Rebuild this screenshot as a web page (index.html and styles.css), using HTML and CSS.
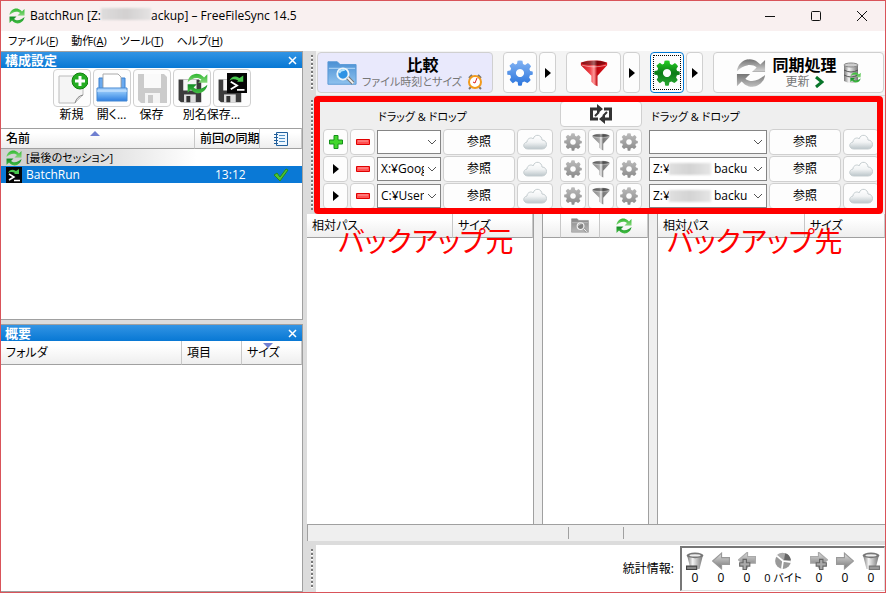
FILE: index.html
```html
<!DOCTYPE html>
<html lang="ja">
<head>
<meta charset="utf-8">
<title>BatchRun – FreeFileSync 14.5</title>
<link rel="stylesheet" href="styles.css">
</head>
<body>
<svg class="defs" width="0" height="0" aria-hidden="true">
  <defs>
    <linearGradient id="green" gradientUnits="userSpaceOnUse" x1="0" y1="2" x2="0" y2="30"><stop offset="0" stop-color="#35b935"/><stop offset=".45" stop-color="#83d778"/><stop offset=".55" stop-color="#138c24"/><stop offset="1" stop-color="#42bd42"/></linearGradient>
    <linearGradient id="silver" gradientUnits="userSpaceOnUse" x1="0" y1="2" x2="0" y2="30"><stop offset="0" stop-color="#777"/><stop offset=".4" stop-color="#ccc"/><stop offset=".55" stop-color="#777"/><stop offset="1" stop-color="#bbb"/></linearGradient>
    <linearGradient id="blueGear" gradientUnits="userSpaceOnUse" x1="0" y1="2" x2="0" y2="30"><stop offset="0" stop-color="#7eb0f2"/><stop offset="1" stop-color="#2f78de"/></linearGradient>
    <linearGradient id="greenGear" gradientUnits="userSpaceOnUse" x1="0" y1="2" x2="0" y2="30"><stop offset="0" stop-color="#22c922"/><stop offset=".5" stop-color="#0b7a16"/><stop offset="1" stop-color="#26a42e"/></linearGradient>
    <linearGradient id="grayGear" gradientUnits="userSpaceOnUse" x1="0" y1="2" x2="0" y2="30"><stop offset="0" stop-color="#b9b9b9"/><stop offset="1" stop-color="#8c8c8c"/></linearGradient>
    <linearGradient id="redFunnel" x1="0" x2="1"><stop offset="0" stop-color="#c80d15"/><stop offset=".35" stop-color="#f0444a"/><stop offset=".5" stop-color="#ff9a9a"/><stop offset=".62" stop-color="#c00810"/><stop offset="1" stop-color="#e01820"/></linearGradient>
    <linearGradient id="grayFunnel" x1="0" x2="1"><stop offset="0" stop-color="#888"/><stop offset=".4" stop-color="#aaa"/><stop offset=".5" stop-color="#eee"/><stop offset=".62" stop-color="#777"/><stop offset="1" stop-color="#999"/></linearGradient>
    <linearGradient id="cloudFill" x1="0" y1="0" x2="0" y2="1"><stop offset="0" stop-color="#fff"/><stop offset=".5" stop-color="#f2f4f5"/><stop offset="1" stop-color="#bcc6ca"/></linearGradient>
    <linearGradient id="folderFill" x1="0" y1="0" x2="0" y2="1"><stop offset="0" stop-color="#4b90d4"/><stop offset="1" stop-color="#8fc2ee"/></linearGradient>
    <linearGradient id="tray" x1="0" y1="0" x2="0" y2="1"><stop offset="0" stop-color="#b7dbff"/><stop offset=".5" stop-color="#6fb0f2"/><stop offset="1" stop-color="#2f7fe0"/></linearGradient>
    <linearGradient id="metal" x1="0" x2="1"><stop offset="0" stop-color="#777"/><stop offset=".35" stop-color="#f4f4f4"/><stop offset="1" stop-color="#777"/></linearGradient>
    <linearGradient id="arrowFill" x1="0" y1="0" x2="0" y2="1"><stop offset="0" stop-color="#ddd"/><stop offset="1" stop-color="#777"/></linearGradient>
  </defs>
  <symbol id="sync" viewBox="0 0 32 32">
    <path d="M1 14C2 5 11-1 19 2c3 1 5 3 7 5l5-5v13H17l5-5C16 5 7 8 1 14z"/>
    <path d="M31 18C30 27 21 33 13 30c-3-1-5-3-7-5l-5 5V17h14l-5 5c6 5 15 2 21-4z"/>
  </symbol>
  <symbol id="gear" viewBox="0 0 32 32">
    <path fill-rule="evenodd" d="M13 1q3-1 6 0l.7 4 2.500 1 3.600-2.400q2.300 1.700 3.800 4.100L27.500 11l1 2.500 3 .7q.5 2 0 4l-3.300.7-1 2.500 2 3.200q-1.800 2.400-4.200 3.800L21.500 26.400l-2.500 1-.8 4q-2.300.5-4.500 0l-.6-4.300-2.500-1L7.200 28.500q-2.500-1.800-3.900-4.200L5 21.100l-1-2.500L.5 18q-.5-2.500 0-4.500l3.600-.6 1-2.500L3 7.200q1.800-2.400 4.200-3.900L10 5.500l2.300-1zM16 11a5 5 0 1 0 .01 0z"/>
  </symbol>
  <symbol id="funnel" viewBox="0 0 32 32">
    <path d="M1 4q15-5 30 0v3L20 19v12q-4-1-7-5v-7L1 7z"/>
    <ellipse cx="16" cy="4.500" rx="14" ry="2.500" fill="#000" opacity=".35"/>
    <path d="M2 7q14 4 28 0" fill="none" stroke="#fff" opacity=".5"/>
  </symbol>
  <symbol id="cloud" viewBox="0 0 24 16">
    <path d="M5 15C0 15-1 9 4 8c0-4 5-5 6-3 2-6 9-4 9 1 6 0 6 9 0 9z" fill="url(#cloudFill)" stroke="#c5cdd0"/>
  </symbol>
  <symbol id="chev" viewBox="0 0 10 6"><path d="M1 1l4 4 4-4" fill="none" stroke="#555"/></symbol>
  <symbol id="tri" viewBox="0 0 6 10"><path d="M0 0l6 5-6 5z"/></symbol>
  <symbol id="minus" viewBox="0 0 14 6"><path d="M.5.5h13v5H.5z" fill="#ff5252" stroke="#e00000"/><path d="M2 2h10" stroke="#ff9c9c"/></symbol>
  <symbol id="floppy" viewBox="0 0 32 32">
    <path d="M2 2h26l3 3v26H5l-3-3z" fill="#3c3c3c"/><path d="M8 2h17v14H8z" fill="#f4f4f4"/><path d="M9 21h15v10H9z" fill="#ddd"/><path d="M12 23h5v8h-5z" fill="#333"/>
  </symbol>
  <symbol id="terminal" viewBox="0 0 16 16">
    <path d="M0 0h16v16H0z" fill="#050505"/><path d="M2 6q2-4 6-3l2 1 3-2v5H8l1-1Q5 4 2 6z" fill="#49c84e"/><path d="M3 7l5 3-5 3M8 13.500h6" fill="none" stroke="#fff" stroke-width="1.500"/>
  </symbol>
  <symbol id="lens" viewBox="0 0 32 26">
    <path d="M1 1h10l3 3h17v21H1z" fill="url(#folderFill)" stroke="#5797d5"/><path d="M2 8h28" stroke="#b8dcfa"/>
    <circle cx="17" cy="14" r="6" fill="#2e93e4" stroke="#eef6fa" stroke-width="2"/><path d="M13 13q2-4 6-3" stroke="#b4e5ff" stroke-width="2" fill="none"/><path d="M22 18l6 6" stroke="#777" stroke-width="4"/><path d="M22 18l6 6" stroke="#f4f4f4" stroke-width="2"/>
  </symbol>
  <symbol id="bin" viewBox="0 0 16 16">
    <path d="M1 3l3 12h8l3-12z" fill="url(#metal)"/><ellipse cx="8" cy="3" rx="7.500" ry="2.500" fill="#777"/><ellipse cx="8" cy="3" rx="5" ry="1" fill="#eee"/>
  </symbol>
  <symbol id="arrow" viewBox="0 0 16 16"><path d="M.5 5h7V1L15.500 8 7.500 15v-4h-7z" fill="url(#arrowFill)" stroke="#999"/></symbol>
  <symbol id="arrowplus" viewBox="0 0 16 16"><path d="M.5 4h7V0L15.500 7 7.500 14v-4h-7z" fill="url(#arrowFill)" stroke="#aaa"/><path d="M8.500 6.500h3v3h3v3h-3v3h-3v-3h-3v-3h3z" fill="#aaa" stroke="#666"/></symbol>
</svg>

<div class="window">
  <header class="titlebar">
    <svg class="i16 green"><use href="#sync"/></svg>
    <h1>BatchRun [Z:<span class="smudge title-smudge"></span>ackup] – FreeFileSync 14.5</h1>
    <div class="winbtns">
      <button aria-label="最小化"><svg width="12" height="12"><path d="M1 6.500h10" stroke="#111"/></svg></button>
      <button aria-label="最大化"><svg width="12" height="12"><rect x="1.500" y="1.500" width="9" height="9" rx="1" fill="none" stroke="#111"/></svg></button>
      <button aria-label="閉じる"><svg width="12" height="12"><path d="M1 1l10 10M11 1L1 11" stroke="#111"/></svg></button>
    </div>
  </header>
  <nav class="menubar">
    <button>ファイル(<u>F</u>)</button><button>動作(<u>A</u>)</button><button>ツール(<u>T</u>)</button><button>ヘルプ(<u>H</u>)</button>
  </nav>
  <div class="workspace">
    <aside class="left">
      <section class="pane config">
        <div class="caption"><h2>構成設定</h2><button aria-label="構成設定を閉じる"><svg width="9" height="9"><path d="M1 1l7 7M8 1L1 8" stroke="#fff" stroke-width="1.500"/></svg></button></div>
        <div class="filebar">
          <div class="tool"><button class="btn" id="b-new" aria-labelledby="l-new"><svg class="i32" viewBox="0 0 32 32"><path d="M3 4h24v19l-8 8H3z" fill="#f5f5f5" stroke="#bbb"/><path d="M19 31q2-7 8-8" fill="#ddd" stroke="#888"/><circle cx="24" cy="9" r="8" fill="#24ad22" stroke="#12820e"/><path d="M24 4v10M19 9h10" stroke="#fff" stroke-width="3"/></svg></button><label id="l-new" for="b-new">新規</label></div>
          <div class="tool"><button class="btn" id="b-open" aria-labelledby="l-open"><svg class="i32" viewBox="0 0 32 32"><path d="M3 16V6h4v10M25 16V6h4v10" fill="#69a9ef" stroke="#3a80cf"/><path d="M7 2h15l3 3v12H7z" fill="#fff" stroke="#aaa"/><path d="M1 16h30v13H1z" fill="url(#tray)" stroke="#4588d2"/><path d="M1 19h30" stroke="#d5ebff"/></svg></button><label id="l-open" for="b-open">開く...</label></div>
          <div class="tool"><button class="btn faded" id="b-save" aria-labelledby="l-save" disabled><svg class="i32" viewBox="0 0 32 32"><use href="#floppy"/></svg></button><label id="l-save" for="b-save">保存</label></div>
          <div class="tool wide"><div class="pair"><button class="btn" aria-label="同期設定を別名保存"><svg class="i32" viewBox="0 0 32 32"><svg x="1" y="6" width="25" height="25"><use href="#floppy"/></svg><svg class="green" x="11" y="1" width="21" height="21"><use href="#sync"/></svg></svg></button><button class="btn" aria-label="一括ジョブを別名保存"><svg class="i32" viewBox="0 0 32 32"><svg x="1" y="6" width="25" height="25"><use href="#floppy"/></svg><svg x="11" y="1" width="20" height="20"><use href="#terminal"/></svg></svg></button></div><span>別名保存...</span></div>
        </div>
        <table class="sessions">
          <thead><tr><th>名前<svg class="sort" width="10" height="5"><path d="M0 5l5-5 5 5z" fill="#6f7fd0"/></svg></th><th class="last">前回の同期</th><th class="log"><svg width="16" height="16"><path d="M3.500 1.500h11v13h-11z" fill="#eef7ff" stroke="#215f9b"/><path d="M6 4.500h6M6 7.500h6M6 10.500h6" stroke="#4c8dc4"/><path d="M1 3.500h4M1 6.500h4M1 9.500h4M1 12.500h4" stroke="#215f9b"/></svg></th></tr></thead>
          <tbody>
            <tr class="prev"><td colspan="3"><span class="cell"><svg class="i16 green"><use href="#sync"/></svg>[最後のセッション]</span></td></tr>
            <tr class="selected"><td><span class="cell"><svg class="i16"><use href="#terminal"/></svg>BatchRun</span></td><td class="time">13:12</td><td class="log"><svg width="16" height="14"><path d="M1 7l3-2 3 4 6-8 2 1-8 11z" fill="#4cc436" stroke="#248b1d"/></svg></td></tr>
          </tbody>
        </table>
      </section>
      <section class="pane overview">
        <div class="caption"><h2>概要</h2><button aria-label="概要を閉じる"><svg width="9" height="9"><path d="M1 1l7 7M8 1L1 8" stroke="#fff" stroke-width="1.500"/></svg></button></div>
        <table class="summary"><thead><tr><th>フォルダ</th><th class="items">項目</th><th class="size">サイズ<svg class="sort" width="10" height="5"><path d="M0 0l5 5 5-5z" fill="#6f7fd0"/></svg></th></tr></thead></table>
      </section>
    </aside>

    <main class="right">
      <div class="strip toolbar">
        <div class="grip"></div>
        <div class="actions">
          <button class="btn compare"><svg class="i30"><use href="#lens"/></svg><span class="txt"><b>比較</b><small class="tight">ファイル時刻とサイズ <svg width="16" height="16" viewBox="0 0 16 16"><path d="M2 4l3-3M14 4l-3-3M4 13l-2 2M12 13l2 2" stroke="#777" stroke-width="2"/><circle cx="8" cy="8" r="6" fill="#fff" stroke="#f29a1c" stroke-width="2"/><path d="M8 9l2-5M8 9L6 8" stroke="#d22" fill="none"/></svg></small></span></button>
          <div class="group"><button class="btn sq" aria-label="比較設定"><svg class="i26 gblue"><use href="#gear"/></svg></button><button class="btn drop" aria-label="比較設定メニュー"><svg class="tri"><use href="#tri"/></svg></button></div>
          <div class="group"><button class="btn filter" aria-label="フィルター"><svg class="i28 fred"><use href="#funnel"/></svg></button><button class="btn drop" aria-label="フィルターメニュー"><svg class="tri"><use href="#tri"/></svg></button></div>
          <div class="group"><button class="btn sq focused" aria-label="同期設定"><svg class="i26 ggreen"><use href="#gear"/></svg></button><button class="btn drop" aria-label="同期設定メニュー"><svg class="tri"><use href="#tri"/></svg></button></div>
          <button class="btn syncbtn"><svg class="i30 silver"><use href="#sync"/></svg><span class="txt"><b>同期処理</b><small>更新 <svg width="9" height="12"><path d="M1 1l6 5-6 5" fill="none" stroke="#08752a" stroke-width="3"/></svg></small></span><svg width="18" height="22" viewBox="0 0 18 22"><path d="M1 3h14v16q-7 4-14 0z" fill="url(#metal)"/><ellipse cx="8" cy="3" rx="7" ry="2" fill="#ccc" stroke="#888"/><path d="M1 8q7 4 14 0M1 13q7 4 14 0" fill="none" stroke="#555"/><svg class="green" x="7" y="10" width="11" height="11"><use href="#sync"/></svg></svg></button>
        </div>
      </div>

      <div class="strip folders">
        <div class="grip"></div>
        <div class="pairs">
          <div class="side source">
            <h3>ドラッグ &amp; ドロップ</h3>
            <div class="row"><button class="btn mini" aria-label="追加"><svg width="16" height="16"><path d="M6 1.500h4v4.500h4.500v4H10v4.500H6V10H1.500V6H6z" fill="#42d72c" stroke="#16911a"/></svg></button><button class="btn mini" aria-label="削除"><svg class="minus"><use href="#minus"/></svg></button><div class="combo"><input aria-label="コピー元 1"><button aria-label="履歴"><svg class="chev"><use href="#chev"/></svg></button></div><button class="btn browse">参照</button><button class="btn cl" aria-label="クラウド"><svg class="cloud"><use href="#cloud"/></svg></button></div>
            <div class="row"><button class="btn mini" aria-label="メニュー"><svg class="tri"><use href="#tri"/></svg></button><button class="btn mini" aria-label="削除"><svg class="minus"><use href="#minus"/></svg></button><div class="combo"><input aria-label="コピー元 2" value="X:¥Google"><button aria-label="履歴"><svg class="chev"><use href="#chev"/></svg></button></div><button class="btn browse">参照</button><button class="btn cl" aria-label="クラウド"><svg class="cloud"><use href="#cloud"/></svg></button></div>
            <div class="row"><button class="btn mini" aria-label="メニュー"><svg class="tri"><use href="#tri"/></svg></button><button class="btn mini" aria-label="削除"><svg class="minus"><use href="#minus"/></svg></button><div class="combo"><input aria-label="コピー元 3" value="C:¥Users"><button aria-label="履歴"><svg class="chev"><use href="#chev"/></svg></button></div><button class="btn browse">参照</button><button class="btn cl" aria-label="クラウド"><svg class="cloud"><use href="#cloud"/></svg></button></div>
          </div>
          <div class="side local">
            <button class="btn swap" aria-label="左右を入れ替え"><svg width="24" height="20" viewBox="0 0 24 20"><path d="M9 15H2.500V5H9M15 5h6.500v10H15" fill="none" stroke="#333" stroke-width="3"/><path d="M8 0l6 5-6 5zM16 10l-6 5 6 5z" fill="#333"/><path d="M6 12l4-4M14 12l4-4" stroke="#333" stroke-width="2"/></svg></button>
            <div class="row"><button class="btn mini" aria-label="比較設定"><svg class="i18 ggray"><use href="#gear"/></svg></button><button class="btn mini" aria-label="フィルター"><svg class="i18 fgray"><use href="#funnel"/></svg></button><button class="btn mini" aria-label="同期設定"><svg class="i18 ggray"><use href="#gear"/></svg></button></div>
            <div class="row"><button class="btn mini" aria-label="比較設定"><svg class="i18 ggray"><use href="#gear"/></svg></button><button class="btn mini" aria-label="フィルター"><svg class="i18 fgray"><use href="#funnel"/></svg></button><button class="btn mini" aria-label="同期設定"><svg class="i18 ggray"><use href="#gear"/></svg></button></div>
            <div class="row"><button class="btn mini" aria-label="比較設定"><svg class="i18 ggray"><use href="#gear"/></svg></button><button class="btn mini" aria-label="フィルター"><svg class="i18 fgray"><use href="#funnel"/></svg></button><button class="btn mini" aria-label="同期設定"><svg class="i18 ggray"><use href="#gear"/></svg></button></div>
          </div>
          <div class="side target">
            <h3>ドラッグ &amp; ドロップ</h3>
            <div class="row"><div class="combo"><input aria-label="コピー先 1"><button aria-label="履歴"><svg class="chev"><use href="#chev"/></svg></button></div><button class="btn browse">参照</button><button class="btn cl" aria-label="クラウド"><svg class="cloud"><use href="#cloud"/></svg></button></div>
            <div class="row"><div class="combo split"><input class="drive" aria-label="コピー先 2 ドライブ" value="Z:¥"><span class="smudge"></span><input aria-label="コピー先 2" value="backu"><button aria-label="履歴"><svg class="chev"><use href="#chev"/></svg></button></div><button class="btn browse">参照</button><button class="btn cl" aria-label="クラウド"><svg class="cloud"><use href="#cloud"/></svg></button></div>
            <div class="row"><div class="combo split"><input class="drive" aria-label="コピー先 3 ドライブ" value="Z:¥"><span class="smudge"></span><input aria-label="コピー先 3" value="backu"><button aria-label="履歴"><svg class="chev"><use href="#chev"/></svg></button></div><button class="btn browse">参照</button><button class="btn cl" aria-label="クラウド"><svg class="cloud"><use href="#cloud"/></svg></button></div>
          </div>
        </div>
        <div class="marker"></div>
      </div>

      <div class="grids">
        <div class="sheet"><table><thead><tr><th>相対パス</th><th class="szcol">サイズ</th></tr></thead></table><p class="note indent">バックアップ元</p></div>
        <div class="sheet center"><table><thead><tr><th class="chk"></th><th><svg class="gray" width="18" height="15"><use href="#lens"/></svg></th><th class="act"><svg class="i16 green"><use href="#sync"/></svg></th></tr></thead></table></div>
        <div class="sheet"><table><thead><tr><th>相対パス</th><th class="szcol">サイズ</th></tr></thead></table><p class="note">バックアップ先</p></div>
      </div>
      <div class="status"><span></span><span></span><span></span></div>
      <footer class="strip stats">
        <div class="grip"></div>
        <div class="statbody">
          <span>統計情報:</span>
          <ul>
            <li><svg class="i18" viewBox="0 0 16 16"><use href="#bin"/><path d="M.5 12.500h9v3h-9z" fill="#888" stroke="#444"/></svg>0</li>
            <li><svg class="i18 flip"><use href="#arrow"/></svg>0</li>
            <li><svg class="i18" viewBox="0 0 16 16"><path d="M15.500 4h-7V0L.5 7l8 7v-4h7z" fill="url(#arrowFill)" stroke="#aaa"/><path d="M4.500 6.500h3v3h3v3h-3v3h-3v-3h-3v-3h3z" fill="#aaa" stroke="#666"/></svg>0</li>
            <li class="bytes"><svg class="i18" viewBox="0 0 16 16"><circle cx="8" cy="8" r="7" fill="#999"/><path d="M8 8L2 3a8 8 0 0 1 8-2z" fill="#aaa"/><path d="M8 8L2 3M8 8l7 1M8 8l-1 7" stroke="#fff" stroke-width="1.500"/><path d="M10 1q4 1 5 6L9 7z" fill="#666"/></svg><span>0 バイト</span></li>
            <li><svg class="i18"><use href="#arrowplus"/></svg>0</li>
            <li><svg class="i18"><use href="#arrow"/></svg>0</li>
            <li><svg class="i18" viewBox="0 0 16 16"><use href="#bin"/><path d="M6.500 12.500h9v3h-9z" fill="#999" stroke="#777"/></svg>0</li>
          </ul>
        </div>
      </footer>
    </main>
  </div>
</div>
</body>
</html>
```
FILE: styles.css
```css
* { box-sizing: border-box; }
body {
  margin: 0;
  font: 12px/16px "Open Sans", "Noto Sans CJK JP", sans-serif;
  font-feature-settings: "palt";
  color: #000;
}
button, input { font: inherit; font-feature-settings: inherit; color: inherit; margin: 0; padding: 0; border: 0; background: none; }
h1, h2, h3, p, ul { margin: 0; padding: 0; font-size: 12px; font-weight: 400; }
ul { list-style: none; }
svg { display: block; flex: none; }
.defs { position: absolute; }
table { width: 100%; border-collapse: separate; border-spacing: 0; table-layout: fixed; }
th, td { padding: 0 0 0 5px; text-align: left; font-weight: 400; white-space: nowrap; }

.i16 { width: 16px; height: 16px; }
.i18 { width: 18px; height: 18px; }
.i26 { width: 26px; height: 26px; }
.i28 { width: 28px; height: 28px; }
.i30 { width: 30px; height: 30px; }
.i32 { width: 32px; height: 32px; }
.tri { width: 6px; height: 10px; }
.minus { width: 14px; height: 6px; }
.chev { width: 10px; height: 6px; }
.cloud { width: 24px; height: 16px; }
.green { fill: url(#green); }
.silver { fill: url(#silver); }
.gblue { fill: url(#blueGear); }
.ggreen { fill: url(#greenGear); }
.ggray { fill: url(#grayGear); }
.fred { fill: url(#redFunnel); }
.fgray { fill: url(#grayFunnel); }
.gray { filter: grayscale(1); }
.flip { transform: scaleX(-1); }

.window { display: flex; flex-direction: column; height: 100vh; border: 1px solid #d9545a; background: #fff; }
.titlebar { display: flex; align-items: center; height: 30px; padding-left: 8px; gap: 5px; background: #f9f0f0; }
.titlebar h1 { display: flex; flex: 1; white-space: pre; }
.smudge { display: block; height: 12px; background: linear-gradient(90deg, #d8d8d8, #c9c9c9, #e0e0e0); filter: blur(1px); opacity: .8; }
.title-smudge { width: 50px; }
.winbtns { display: flex; }
.winbtns button { display: grid; place-items: center; width: 46px; height: 30px; }
.menubar { display: flex; gap: 13px; height: 20px; padding-left: 7px; font-size: 11px; }
.workspace { display: flex; flex: 1; min-height: 0; gap: 4px; background: #dcdcdc; }

.left { display: flex; flex-direction: column; gap: 4px; width: 302px; flex: none; }
.pane { border: 1px solid #a0a0a0; border-left: 0; background: #fff; }
.config { flex: 0 0 269px; }
.overview { flex: 1; }
.caption { display: flex; align-items: center; justify-content: space-between; height: 16px; padding: 0 5px 0 4px; color: #fff; background: linear-gradient(#3294e4, #0878d4); }
.caption h2 { font-size: 13px; font-weight: 700; }
.btn { display: flex; align-items: center; justify-content: center; border: 1px solid #d0d0d0; border-radius: 4px; background: #fdfdfd; }
.filebar { display: flex; justify-content: center; gap: 2px; height: 60px; padding-top: 1px; }
.tool { display: flex; flex-direction: column; align-items: center; width: 38px; white-space: nowrap; }
.tool.wide { width: 78px; }
.pair { display: flex; gap: 2px; }
.tool .btn { width: 38px; height: 38px; }
.faded svg { opacity: .25; }

thead th { position: relative; height: 24px; border-bottom: 1px solid #a0a0a0; border-right: 1px solid #c8c8c8; background: linear-gradient(#fff 20%, #eee); }
.sessions thead th { height: 21px; border-top: 1px solid #a0a0a0; font-weight: 500; }
.last { width: 65px; }
.log { width: 42px; }
.log svg { margin-left: 8px; }
.sort { position: absolute; top: 2px; left: 46%; }
.size .sort { left: 36%; }
.sessions td { height: 17px; }
.cell { display: flex; align-items: center; gap: 4px; }
.prev td { background: linear-gradient(90deg, #d2d2d2 20%, #fff 65%); font-size: 11px; }
.selected td { background: #0a79d6; color: #fff; }
td.time { padding-left: 20px; }
.items, .size { width: 60px; }

.right { display: flex; flex: 1; flex-direction: column; min-width: 0; }
.strip { display: flex; position: relative; }
.grip { flex: none; width: 9px; margin: 4px 0; background: repeating-linear-gradient(#777 0 2px, #fff 2px 3px, #dcdcdc 3px 4px) 4px 0 / 2px 100% no-repeat; }
.actions { display: flex; flex: 1; gap: 10px; height: 44px; padding: 1px; background: #f4f4f4; }
.actions .btn { height: 41px; }
.group { display: flex; gap: 2px; }
.actions .sq { width: 34px; }
.actions .drop { width: 17px; }
.actions .filter { width: 55px; }
.actions .compare { width: 176px; gap: 5px; background: #e9e9fc; }
.actions .focused { border-color: #0078d4; outline: 1px dotted #000; outline-offset: -4px; }
.syncbtn { flex: 1; gap: 6px; }
.txt { display: flex; flex-direction: column; align-items: center; }
.txt b { font-size: 16px; line-height: 18px; }
.txt small { display: flex; align-items: center; gap: 5px; font-size: 12px; color: #777; white-space: nowrap; }
.txt .tight { font-size: 11px; }

.folders { margin-top: 1px; height: 118px; }
.pairs { display: flex; flex: 1; min-width: 0; gap: 7px; padding: 5px 6px 0 7px; background: #efefef; }
.side { display: flex; flex-direction: column; gap: 1px; }
.source { flex: 0 1 230px; }
.local { flex: none; }
.target { flex: 1; min-width: 0; }
.side h3 { height: 27px; padding-top: 8px; font-size: 11px; }
.source h3 { padding-left: 55px; }
.target h3 { padding-left: 2px; }
.swap { height: 26px; margin-bottom: 1px; }
.row { display: flex; align-items: center; gap: 2px; height: 26px; }
.mini { width: 26px; height: 26px; }
.source .mini { width: 25px; }
.combo { display: flex; align-items: center; flex: 1; min-width: 0; height: 24px; border: 1px solid #858585; background: #fff; }
.combo input { flex: 1; min-width: 0; width: 0; margin-left: 3px; }
.combo button { display: grid; place-items: center; width: 16px; height: 22px; }
.combo .drive { flex: none; width: 16px; }
.split .smudge { width: 42px; }
.browse { width: 72px; height: 26px; }
.cl { width: 36px; height: 26px; }
.marker { position: absolute; top: 0; right: 2px; bottom: 0; left: 7px; border: 6px solid #f00; border-radius: 4px; pointer-events: none; }

.grids { display: grid; grid-template-columns: 227fr 107px 228fr; gap: 8px; flex: 1; background: #efefef; }
.sheet { position: relative; border: 1px solid #a0a0a0; border-top: 0; border-bottom: 0; background: #fff; }
.sheet:first-child { border-left: 0; }
.sheet:last-child { border-right: 0; }
.szcol { width: 80px; }
.chk { width: 18px; }
.act { width: 48px; }
.center th { padding: 0; }
.center th svg { margin: 0 auto; }
.note { position: absolute; top: 4px; left: 9px; font: 400 28px/44px "Noto Sans CJK JP", sans-serif; font-feature-settings: "palt"; color: #f00; white-space: nowrap; }
.note.indent { left: 31px; }
.status { display: grid; grid-template-columns: 260px 55px 1fr; height: 17px; padding: 2px 0; border: 1px solid #a0a0a0; border-width: 1px 0 0 1px; background: #efefef; }
.status span + span { border-left: 1px solid #a0a0a0; }
.stats { margin-top: 4px; height: 47px; }
.statbody { display: flex; flex: 1; align-items: center; justify-content: flex-end; gap: 6px; background: #fff; }
.stats ul { display: flex; align-items: center; height: 45px; border: 1px solid #a0a0a0; border-width: 2px 1px 1px 2px; border-color: #777 #ddd #ddd #777; }
.stats li { display: flex; flex-direction: column; align-items: center; width: 26px; white-space: nowrap; }
.stats .bytes { width: 46px; }
.bytes span { font-size: 11px; }
```
